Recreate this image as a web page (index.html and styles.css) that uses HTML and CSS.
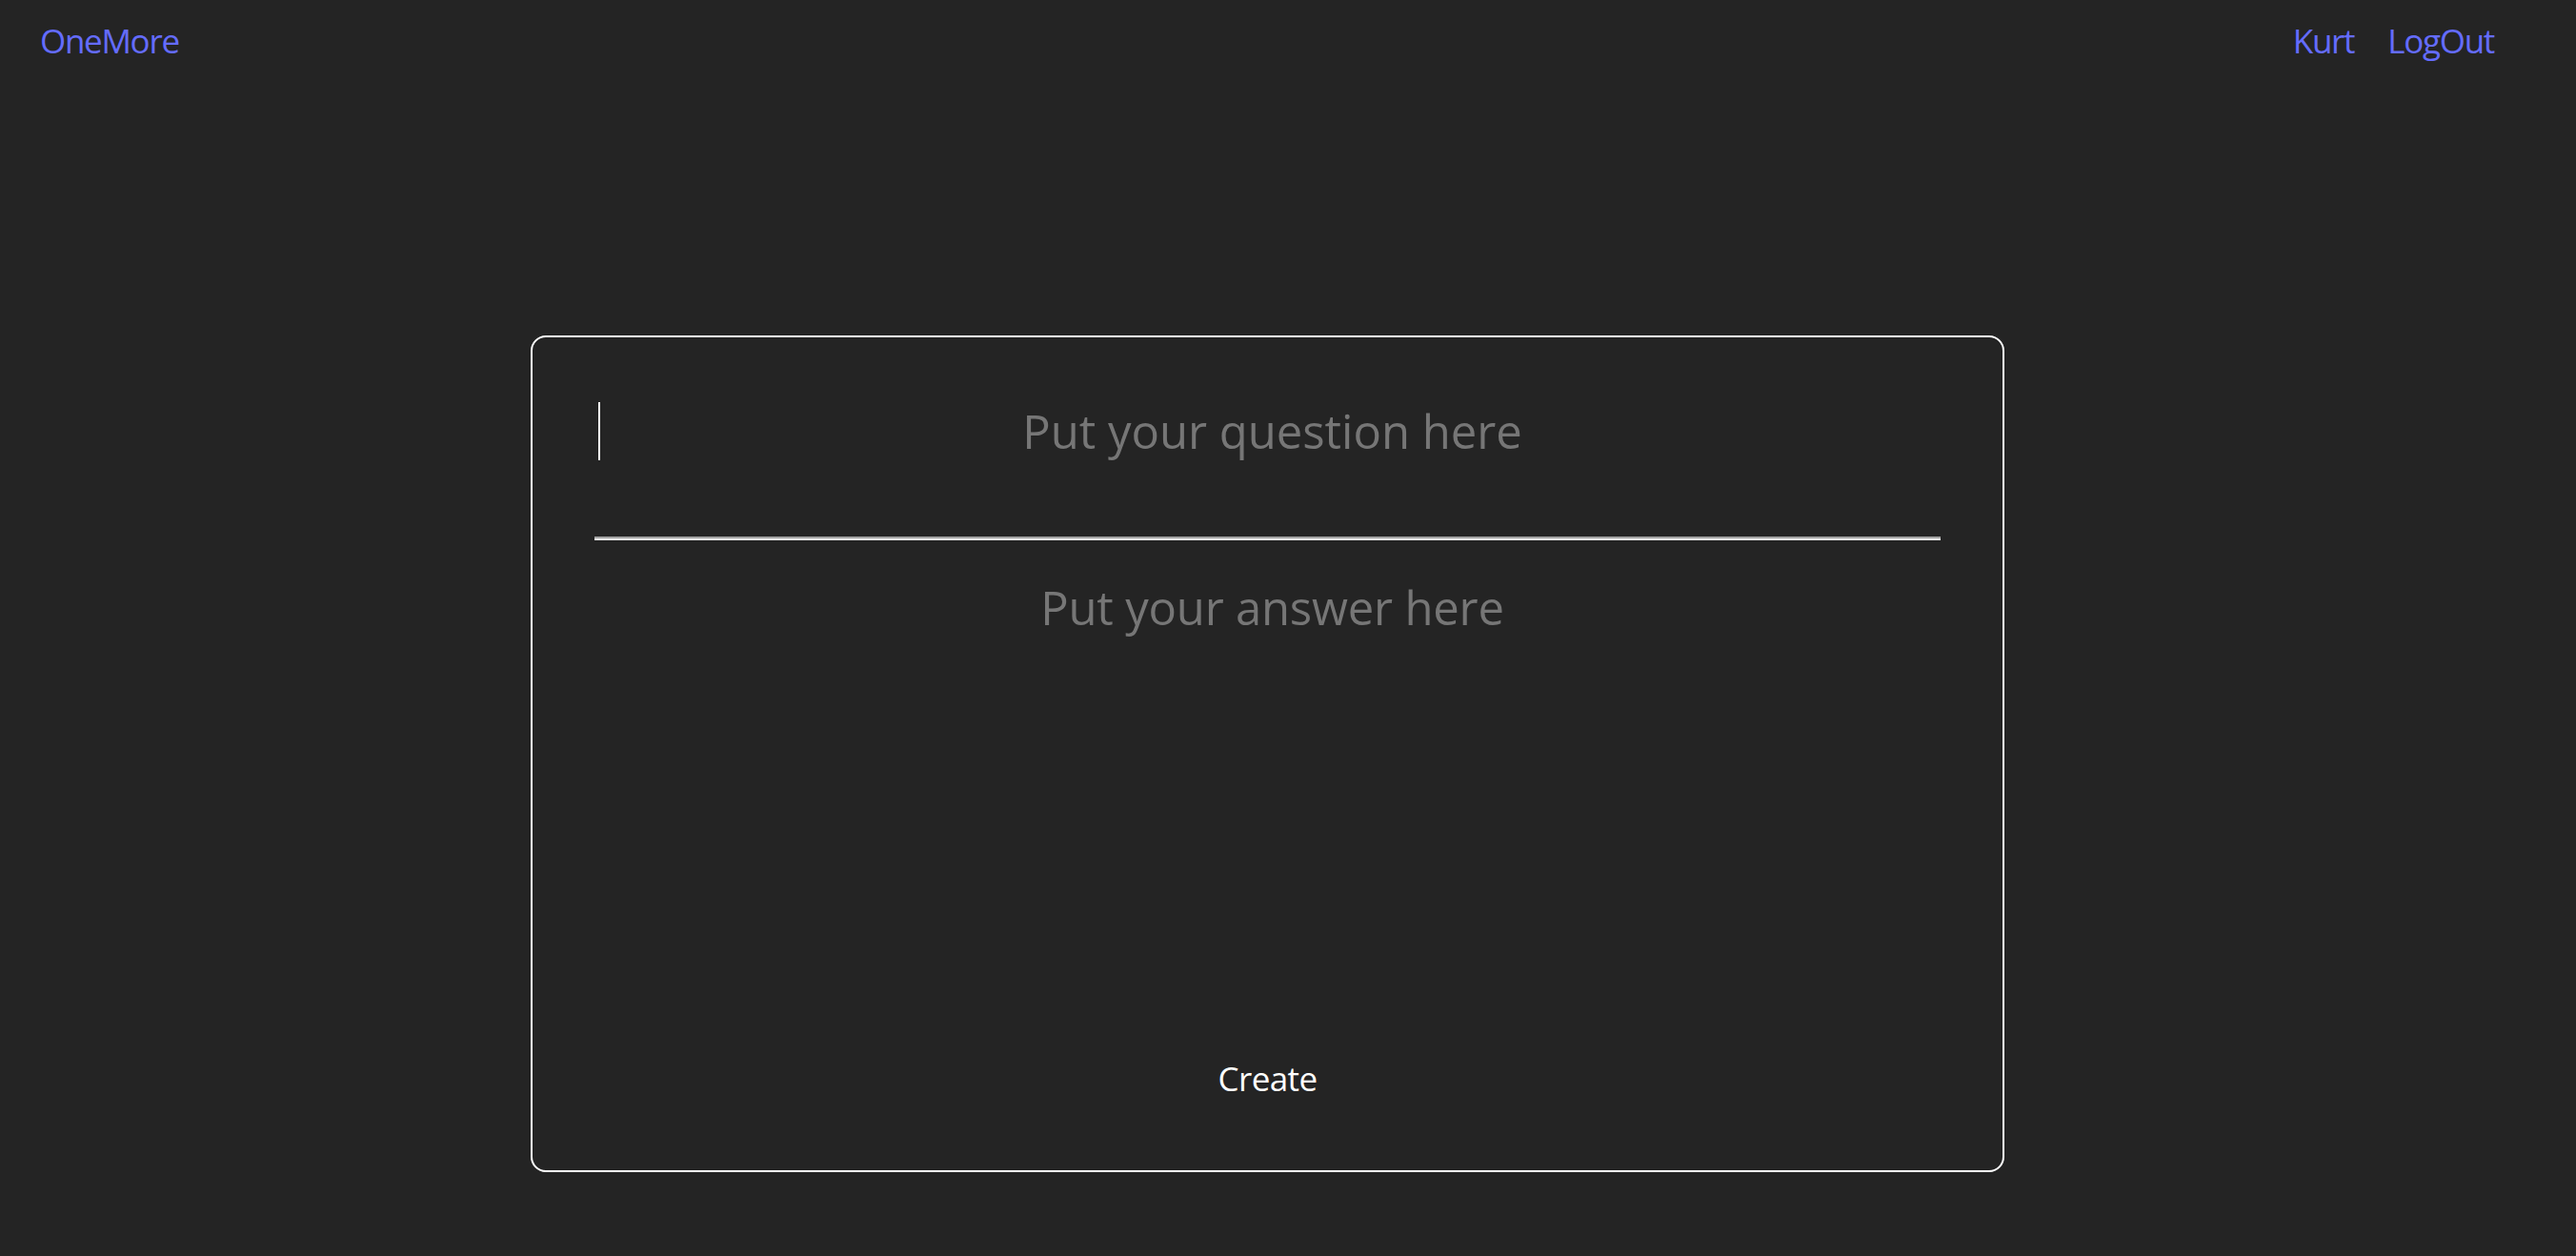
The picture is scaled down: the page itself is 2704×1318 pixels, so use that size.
FILE: index.html
```html
<!DOCTYPE html>
<html lang="en">
<head>
<meta charset="utf-8">
<title>OneMore</title>
<link rel="stylesheet" href="styles.css">
</head>
<body>
<nav class="nav">
  <a class="brand" href="#">OneMore</a>
  <div class="nav-links">
    <a class="nav-link" href="#">Kurt</a>
    <a class="nav-link" href="#">LogOut</a>
  </div>
</nav>
<main class="main">
  <form class="card">
    <div class="qwrap">
      <input class="question" type="text" placeholder="Put your question here">
      <span class="caret"></span>
    </div>
    <textarea class="answer" placeholder="Put your answer here"></textarea>
    <button class="create" type="button">Create</button>
  </form>
</main>
</body>
</html>
```
FILE: styles.css
```css
html, body {
  margin: 0;
  padding: 0;
}
body {
  background: #242424;
  font-family: "Open Sans", "Noto Sans", sans-serif;
  color: rgba(255, 255, 255, 0.87);
  min-height: 1318px;
}
.nav {
  display: flex;
  justify-content: space-between;
  align-items: flex-start;
  padding: 19px 86px 0 42px;
}
.brand,
.nav-link {
  color: #646cff;
  text-decoration: none;
  font-size: 35px;
  line-height: 48px;
  letter-spacing: -1.3px;
}
.nav-links {
  display: flex;
  gap: 35px;
}
.main {
  display: flex;
  justify-content: center;
  padding: 285px 43px 0 0;
}
.card {
  box-sizing: border-box;
  width: 1547px;
  height: 878px;
  border: 2px solid #ffffff;
  border-radius: 16px;
  padding: 64px 65px 64px 65px;
  display: flex;
  flex-direction: column;
  align-items: stretch;
}
.qwrap {
  position: relative;
}
.question,
.answer {
  display: block;
  box-sizing: border-box;
  width: 100%;
  margin: 0;
  background: transparent;
  border: none;
  outline: none;
  color: #ffffff;
  font-family: "Open Sans", "Noto Sans", sans-serif;
  font-size: 49px;
  line-height: 67px;
  text-align: center;
}
.question {
  height: 147px;
  padding: 0 0 78px 10px;
  border-bottom: 2px solid #a4a4a4;
  box-shadow: 0 2px 0 #efefef;
}
.answer {
  flex: 1;
  resize: none;
  padding: 39px 0 0 10px;
  overflow: hidden;
  letter-spacing: -0.2px;
}
.question::placeholder,
.answer::placeholder {
  color: #767676;
  opacity: 1;
}
.caret {
  position: absolute;
  left: 4px;
  top: 4px;
  width: 2px;
  height: 61px;
  background: #ffffff;
}
.create {
  align-self: center;
  background: transparent;
  border: none;
  color: #ffffff;
  font-family: "Open Sans", "Noto Sans", sans-serif;
  font-size: 35px;
  line-height: 48px;
  letter-spacing: -0.6px;
  padding: 12px 20px 8px 20px;
  cursor: pointer;
}
```
